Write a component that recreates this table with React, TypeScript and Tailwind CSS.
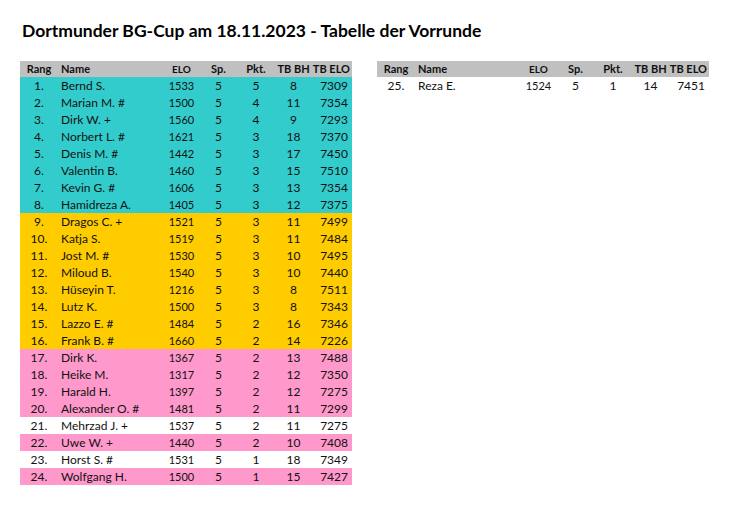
type Row = { rang: number; name: string; elo: number; sp: number; pkt: number; bh: number; tbElo: number; bg: string };

const teal = "bg-[#33cccc]";
const yellow = "bg-[#ffcc00]";
const pink = "bg-[#ff99cc]";
const white = "bg-white";

const rows: Row[] = [
	{ rang: 1, name: "Bernd S.", elo: 1533, sp: 5, pkt: 5, bh: 8, tbElo: 7309, bg: teal },
	{ rang: 2, name: "Marian M. #", elo: 1500, sp: 5, pkt: 4, bh: 11, tbElo: 7354, bg: teal },
	{ rang: 3, name: "Dirk W. +", elo: 1560, sp: 5, pkt: 4, bh: 9, tbElo: 7293, bg: teal },
	{ rang: 4, name: "Norbert L. #", elo: 1621, sp: 5, pkt: 3, bh: 18, tbElo: 7370, bg: teal },
	{ rang: 5, name: "Denis M. #", elo: 1442, sp: 5, pkt: 3, bh: 17, tbElo: 7450, bg: teal },
	{ rang: 6, name: "Valentin B.", elo: 1460, sp: 5, pkt: 3, bh: 15, tbElo: 7510, bg: teal },
	{ rang: 7, name: "Kevin G. #", elo: 1606, sp: 5, pkt: 3, bh: 13, tbElo: 7354, bg: teal },
	{ rang: 8, name: "Hamidreza A.", elo: 1405, sp: 5, pkt: 3, bh: 12, tbElo: 7375, bg: teal },
	{ rang: 9, name: "Dragos C. +", elo: 1521, sp: 5, pkt: 3, bh: 11, tbElo: 7499, bg: yellow },
	{ rang: 10, name: "Katja S.", elo: 1519, sp: 5, pkt: 3, bh: 11, tbElo: 7484, bg: yellow },
	{ rang: 11, name: "Jost M. #", elo: 1530, sp: 5, pkt: 3, bh: 10, tbElo: 7495, bg: yellow },
	{ rang: 12, name: "Miloud B.", elo: 1540, sp: 5, pkt: 3, bh: 10, tbElo: 7440, bg: yellow },
	{ rang: 13, name: "Hüseyin T.", elo: 1216, sp: 5, pkt: 3, bh: 8, tbElo: 7511, bg: yellow },
	{ rang: 14, name: "Lutz K.", elo: 1500, sp: 5, pkt: 3, bh: 8, tbElo: 7343, bg: yellow },
	{ rang: 15, name: "Lazzo E. #", elo: 1484, sp: 5, pkt: 2, bh: 16, tbElo: 7346, bg: yellow },
	{ rang: 16, name: "Frank B. #", elo: 1660, sp: 5, pkt: 2, bh: 14, tbElo: 7226, bg: yellow },
	{ rang: 17, name: "Dirk K.", elo: 1367, sp: 5, pkt: 2, bh: 13, tbElo: 7488, bg: pink },
	{ rang: 18, name: "Heike M.", elo: 1317, sp: 5, pkt: 2, bh: 12, tbElo: 7350, bg: pink },
	{ rang: 19, name: "Harald H.", elo: 1397, sp: 5, pkt: 2, bh: 12, tbElo: 7275, bg: pink },
	{ rang: 20, name: "Alexander O. #", elo: 1481, sp: 5, pkt: 2, bh: 11, tbElo: 7299, bg: pink },
	{ rang: 21, name: "Mehrzad J. +", elo: 1537, sp: 5, pkt: 2, bh: 11, tbElo: 7275, bg: white },
	{ rang: 22, name: "Uwe W. +", elo: 1440, sp: 5, pkt: 2, bh: 10, tbElo: 7408, bg: pink },
	{ rang: 23, name: "Horst S. #", elo: 1531, sp: 5, pkt: 1, bh: 18, tbElo: 7349, bg: white },
	{ rang: 24, name: "Wolfgang H.", elo: 1500, sp: 5, pkt: 1, bh: 15, tbElo: 7427, bg: pink },
];

const rightRows: Row[] = [{ rang: 25, name: "Reza E.", elo: 1524, sp: 5, pkt: 1, bh: 14, tbElo: 7451, bg: white }];

const cols = "grid grid-cols-[38px_105px_37px_37px_38px_37px_1fr]";

function Table(props: { data: Row[] }) {
	return (
		<div className="w-[332px] text-[12px] text-[#111]">
			{/* header */}
			<div className={`${cols} h-4 items-center bg-[#c0c0c0] font-bold text-[11px]`}>
				<span className="text-center">Rang</span>
				<span className="pl-[3px]">Name</span>
				<span className="text-center text-[10px]">ELO</span>
				<span className="text-center">Sp.</span>
				<span className="text-center">Pkt.</span>
				<span className="text-center whitespace-nowrap">TB BH</span>
				<span className="text-right pr-[2px] whitespace-nowrap">TB ELO</span>
			</div>
			{props.data.map((r) => (
				<div key={r.rang} className={`${cols} h-[17px] items-center ${r.bg}`}>
					<span className="text-center">{r.rang}.</span>
					<span className="pl-[3px] whitespace-nowrap">{r.name}</span>
					<span className="text-center text-[11px]">{r.elo}</span>
					<span className="text-center">{r.sp}</span>
					<span className="text-center">{r.pkt}</span>
					<span className="text-center">{r.bh}</span>
					<span className="text-right pr-1">{r.tbElo}</span>
				</div>
			))}
		</div>
	);
}

export default function App() {
	return (
		<div className="w-[734px] h-[506px] bg-white pl-5 pt-[21px] font-['Lato','Noto_Sans',sans-serif]">
			<h1 className="pl-[2px] text-[17.5px] font-bold leading-5 text-black">Dortmunder BG-Cup am 18.11.2023 - Tabelle der Vorrunde</h1>
			<div className="flex gap-[25px] mt-5">
				<Table data={rows} />
				<Table data={rightRows} />
			</div>
		</div>
	);
}
